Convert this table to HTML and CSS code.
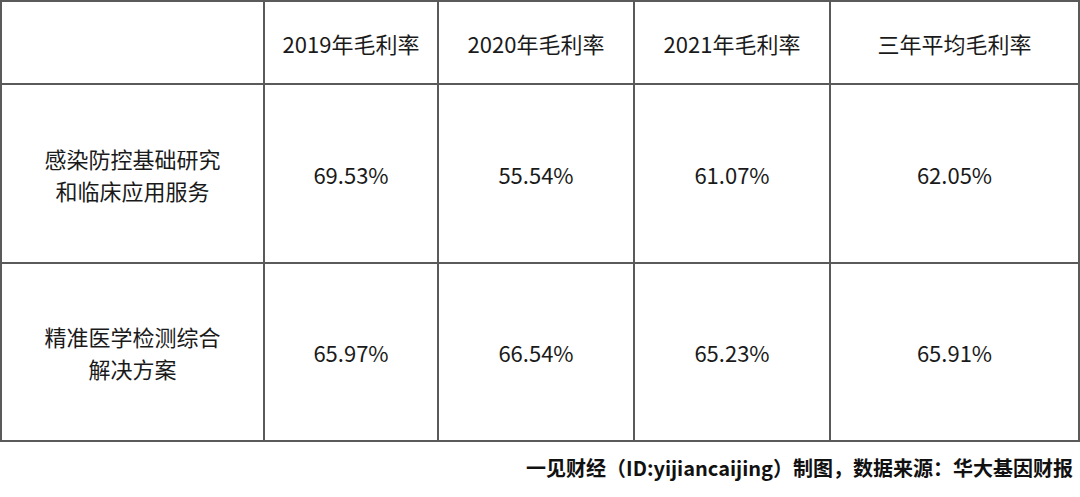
FILE: index.html
```html
<!DOCTYPE html>
<html lang="zh">
<head>
<meta charset="utf-8">
<link rel="stylesheet" href="styles.css">
</head>
<body>
<div class="page">
  <table class="grid">
    <colgroup>
      <col class="c0"><col class="c1"><col class="c2"><col class="c3"><col class="c4">
    </colgroup>
    <tr class="head">
      <td></td>
      <td>2019年毛利率</td>
      <td>2020年毛利率</td>
      <td>2021年毛利率</td>
      <td>三年平均毛利率</td>
    </tr>
    <tr class="row r1">
      <td class="name">感染防控基础研究<br>和临床应用服务</td>
      <td>69.53%</td>
      <td>55.54%</td>
      <td>61.07%</td>
      <td>62.05%</td>
    </tr>
    <tr class="row r2">
      <td class="name">精准医学检测综合<br>解决方案</td>
      <td>65.97%</td>
      <td>66.54%</td>
      <td>65.23%</td>
      <td>65.91%</td>
    </tr>
  </table>
  <div class="note">一见财经（ID:yijiancaijing）制图，数据来源：华大基因财报</div>
</div>
</body>
</html>
```
FILE: styles.css
```css
html, body {
  margin: 0;
  padding: 0;
  background: #fff;
}
body {
  font-family: "Noto Sans CJK SC", "Noto Sans", sans-serif;
  color: #1a1a1a;
  width: 1080px;
  height: 497px;
  overflow: hidden;
}
.page {
  display: flex;
  flex-direction: column;
  width: 1080px;
}
.grid {
  border-collapse: collapse;
  width: 1078px;
  table-layout: fixed;
}
.grid td {
  border: 2px solid #5a5a5a;
  text-align: center;
  vertical-align: middle;
  font-size: 22px;
  padding: 0;
  line-height: 32px;
}
.c0 { width: 263px; }
.c1 { width: 174px; }
.c2 { width: 196px; }
.c3 { width: 196px; }
.c4 { width: 249px; }
.head td { height: 81px; }
.r1 td { height: 177px; }
.r2 td { height: 176px; }
.note {
  text-align: right;
  font-weight: 700;
  font-size: 20px;
  line-height: 30px;
  padding-right: 7px;
  padding-top: 11px;
  color: #111;
}
```
